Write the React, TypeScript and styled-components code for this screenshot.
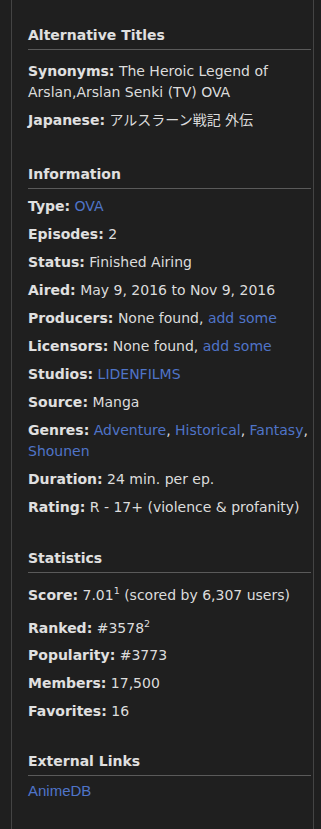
import React from 'react';
import styled, { createGlobalStyle } from 'styled-components';

const GlobalStyle = createGlobalStyle`
  html, body {
    margin: 0;
    padding: 0;
    background-color: #1f1f1f;
  }
  body {
    font-family: 'DejaVu Sans', Verdana, 'Noto Sans CJK JP', sans-serif;
    color: #dcdcdc;
  }
`;

const Page = styled.div`
  padding-left: 11px;
  width: 303px;
`;

const SideBar = styled.div`
  box-sizing: border-box;
  width: 303px;
  min-height: 829px;
  border-left: 1px solid #444;
  border-right: 1px solid #444;
  padding: 25px 2px 20px 16px;
`;

type SectionProps = {
  $gap?: number;
};

const Section = styled.div<SectionProps>`
  margin-top: ${({ $gap }) => $gap ?? 0}px;
`;

type HeadingProps = {
  $loose?: boolean;
};

const Heading = styled.h2<HeadingProps>`
  margin: 0 0 ${({ $loose }) => ($loose ? 11 : 7)}px;
  padding-bottom: 4px;
  font-size: 14px;
  line-height: 20px;
  font-weight: bold;
  color: #e0e0e0;
  border-bottom: 1px solid #5a5a5a;
`;

const Item = styled.div`
  font-size: 14px;
  line-height: 21px;
  margin-bottom: 7px;
`;

const Label = styled.span`
  font-weight: bold;
  color: #e0e0e0;
`;

const Link = styled.a`
  color: #4f74c8;
  text-decoration: none;
`;

const ExternalList = styled.div`
  font-family: 'Liberation Sans', Arial, sans-serif;
  font-size: 15px;
  line-height: 16px;
`;

const Sup = styled.sup`
  font-size: 9.5px;
`;

type RowProps = {
  label: string;
  children: React.ReactNode;
};

const Row: React.FC<RowProps> = ({ label, children }) => (
  <Item>
    <Label>{label}:</Label> {children}
  </Item>
);

const App: React.FC = () => (
  <Page>
    <GlobalStyle />
    <SideBar>
      <Section>
        <Heading $loose>Alternative Titles</Heading>
        <Row label="Synonyms">The Heroic Legend of Arslan,Arslan Senki (TV) OVA</Row>
        <Row label="Japanese">アルスラーン戦記 外伝</Row>
      </Section>

      <Section $gap={33}>
        <Heading>Information</Heading>
        <Row label="Type">
          <Link href="#">OVA</Link>
        </Row>
        <Row label="Episodes">2</Row>
        <Row label="Status">Finished Airing</Row>
        <Row label="Aired">May 9, 2016 to Nov 9, 2016</Row>
        <Row label="Producers">
          None found, <Link href="#">add some</Link>
        </Row>
        <Row label="Licensors">
          None found, <Link href="#">add some</Link>
        </Row>
        <Row label="Studios">
          <Link href="#">LIDENFILMS</Link>
        </Row>
        <Row label="Source">Manga</Row>
        <Row label="Genres">
          <Link href="#">Adventure</Link>, <Link href="#">Historical</Link>,{' '}
          <Link href="#">Fantasy</Link>, <Link href="#">Shounen</Link>
        </Row>
        <Row label="Duration">24 min. per ep.</Row>
        <Row label="Rating">R - 17+ (violence &amp; profanity)</Row>
      </Section>

      <Section $gap={30}>
        <Heading>Statistics</Heading>
        <Row label="Score">
          7.01<Sup>1</Sup> (scored by 6,307 users)
        </Row>
        <Row label="Ranked">
          #3578<Sup>2</Sup>
        </Row>
        <Row label="Popularity">#3773</Row>
        <Row label="Members">17,500</Row>
        <Row label="Favorites">16</Row>
      </Section>

      <Section $gap={29}>
        <Heading>External Links</Heading>
        <ExternalList>
          <Link href="#">AnimeDB</Link>
        </ExternalList>
      </Section>
    </SideBar>
  </Page>
);

export default App;
